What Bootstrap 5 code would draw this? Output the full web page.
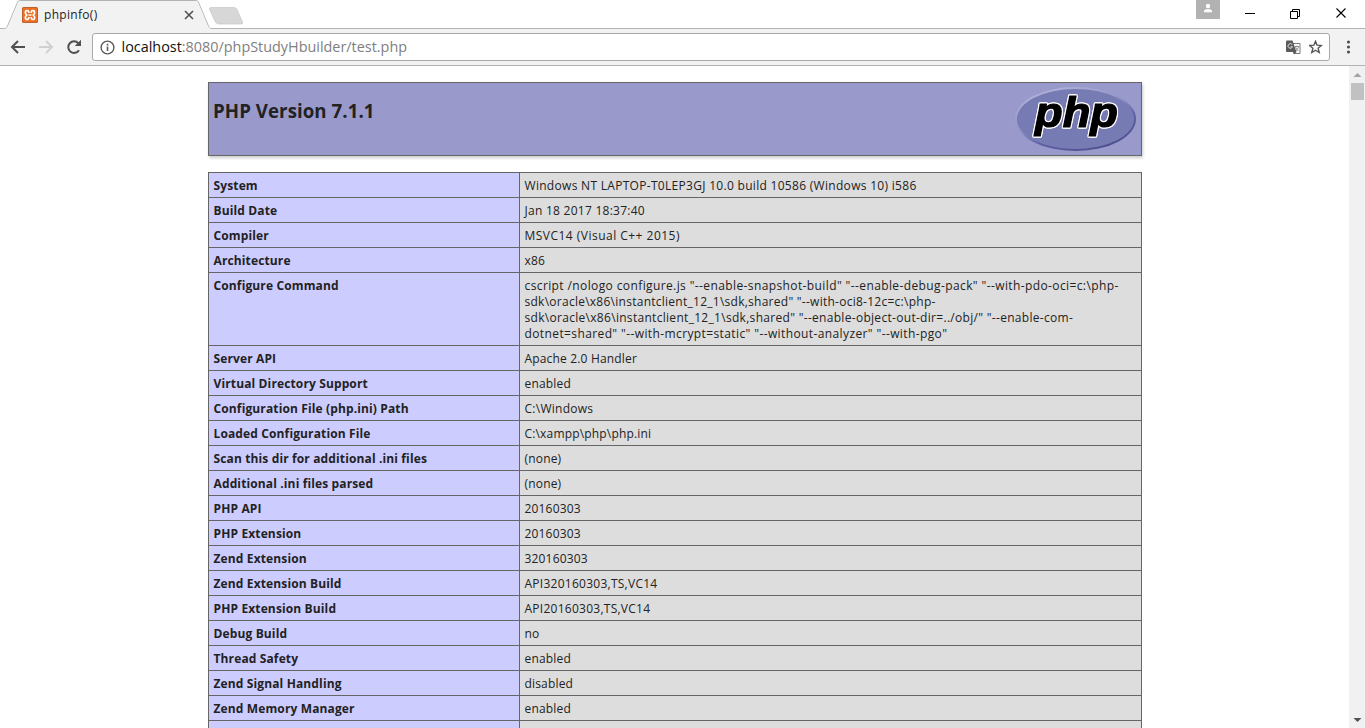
<!DOCTYPE html>
<html lang="en">
<head>
<meta charset="utf-8">
<title>phpinfo()</title>
<meta name="viewport" content="width=device-width, initial-scale=1">
<link href="https://cdn.jsdelivr.net/npm/bootstrap@5.3.0/dist/css/bootstrap.min.css" rel="stylesheet">
<style>
  body{font-family:"Open Sans","Noto Sans",sans-serif;font-size:12px;line-height:16px;color:#222;height:728px;overflow:hidden;background:#fff}
  svg{display:block;flex:none}
  .titlebar{height:29px;position:relative}
  .tabshape{position:absolute;left:0;top:0}
  .tab-label{position:relative;padding-left:22px;height:29px}
  .tab-title{font-size:12px;color:#222;width:138px;margin-left:6px;letter-spacing:.3px}
  .user-chip{position:absolute;left:1196px;top:0}
  .win-btns{position:absolute;left:1244px;top:6px}
  .toolbar-row{height:37px;background:#f2f2f2;border-bottom:1px solid #b3b3b3;padding-left:8px}
  .omnibox{width:1238px;height:28px;margin-left:10px;background:#fff;border:1px solid #a9a9a9;border-radius:3px;font-size:14.4px;padding:0 6px 0 7px;color:#808080}
  .omnibox b{font-weight:400;color:#111}
  .url{padding-left:2.500px}
  .viewport-row{height:662px}
  .page-area{width:1349px;padding:16px 0 0 208px;overflow:hidden}
  .scroller{width:16px;background:#f1f1f1}
  .thumb{width:13px;height:17px;background:#c1c1c1;margin:0 0 0 2px}
  .info-head{width:934px;height:74px;background:#99c;border:1px solid #666;box-shadow:1px 2px 3px #ccc;margin-bottom:16px;padding:4px 5px 0 4px}
  .info-head h1{font-size:18.7px;line-height:24px;font-weight:700;margin:12px 0 0;color:#222;letter-spacing:.05px}
  .php-logo{overflow:visible}
  .php-word{filter:drop-shadow(1px 0 0 #fff) drop-shadow(-1px 0 0 #fff) drop-shadow(0 1px 0 #fff) drop-shadow(0 -1px 0 #fff)}
  .info-table{width:934px;border-collapse:collapse;table-layout:fixed}
  .info-table td{border:1px solid #666;padding:5px 4px 3px 4.500px;height:25px;vertical-align:top;white-space:nowrap;letter-spacing:.17px}
  .info-table td:first-child{width:311px;background:#ccf;font-weight:700;letter-spacing:.13px}
  .info-table td:last-child{background:#ddd}
  .info-table .track-a{letter-spacing:.26px}
  .info-table .track-b{letter-spacing:.3px}
  .info-table .track-c{letter-spacing:.39px}
  .info-table .track-d{letter-spacing:.48px}
</style>
</head>
<body>
<header class="titlebar">
  <svg class="tabshape" width="1365" height="29">
    <path d="M0 28.5H4C7 28.5 7 27 8 25L17 3.500C18 1 18.500 .5 21 .5H195C198 .5 198 1 199 3.500L208 25C209 27.500 209 28.500 212 28.500H1365" fill="none" stroke="#b3b3b3"/>
    <path d="M5 29C7.500 28.500 8 27 8.500 25.500L17.500 4C18.500 1.500 19 1 21 1H195C197.500 1 197.700 1.500 198.600 4L207.500 25.500C208.500 28 209 28.500 211 29Z" fill="#f2f2f2"/>
    <path d="M211 7.500H234Q236 7.500 237 9.500L242.500 22Q243.300 24 241 24H219Q216.500 24 215.500 22L209.500 9.500Q209 7.500 211 7.500Z" fill="#d7d7d7" stroke="#c6c6c6" stroke-width=".7"/>
  </svg>
  <div class="tab-label d-flex align-items-center">
    <svg width="16" height="16"><rect width="16" height="16" rx="1.500" fill="#ee7024"/><rect x=".5" y=".5" width="15" height="15" rx="1.500" fill="none" stroke="#b96233"/><path d="M6.700 6V4.600Q6.400 3.400 5.200 3.500Q3.200 3.700 3.400 5.700Q3.500 7.300 4.800 8Q3.500 8.700 3.400 10.300Q3.200 12.300 5.200 12.500Q6.400 12.600 6.700 11.400V10M9.300 6V4.600Q9.600 3.400 10.800 3.500Q12.800 3.700 12.600 5.700Q12.500 7.300 11.200 8Q12.500 8.700 12.600 10.300Q12.800 12.300 10.800 12.500Q9.600 12.600 9.300 11.400V10M6.500 8H9.500" fill="none" stroke="#fff" stroke-width="1.700" stroke-linejoin="round"/></svg>
    <span class="tab-title">phpinfo()</span>
    <svg width="12" height="12"><path d="M3 2L11 10M11 2L3 10" stroke="#4d4d4d" stroke-width="1.500"/></svg>
  </div>
  <svg class="user-chip" width="24" height="19"><rect width="24" height="19" fill="#b2b2b2"/><circle cx="12" cy="6" r="2.200" fill="#fff"/><path d="M8 12.200V11Q8.500 9 12 9T16 11V12.200Z" fill="#fff"/></svg>
  <svg class="win-btns" width="110" height="16" fill="none" stroke="#000"><path d="M1 7.500H11M46.500 5.500H53.500V12.500H46.500ZM48.500 5V3.500H55.500V10.500H54"/><path d="M92.500 2.500L101.500 11.500M101.500 2.500L92.500 11.500" stroke-width="1.100"/></svg>
</header>
<nav class="toolbar-row d-flex align-items-center">
  <svg width="74" height="20" fill="none" stroke-width="2"><path d="M17 10H4M10 4L4 10L10 16" stroke="#505050"/><path d="M31 10H44M38 4L44 10L38 16" stroke="#d0d0d0"/><path d="M71 13.200A5.800 5.800 0 1 1 70.400 6.300" stroke="#505050"/><path d="M73 2.800V9H66.800Z" fill="#505050"/></svg>
  <div class="omnibox d-flex align-items-center">
    <svg width="15" height="15" fill="none" stroke="#5a5a5a"><circle cx="7.500" cy="7.500" r="6.400" stroke-width="1.400"/><path d="M7.500 6.500V11M7.500 3.800V5.400" stroke-width="1.600"/></svg>
    <span class="url ms-1 flex-grow-1"><b>localhost</b>:8080/phpStudyHbuilder/test.php</span>
    <svg width="15" height="15"><path d="M6.500 3.500H14V13.500H8Z" fill="#fff" stroke="#777"/><path d="M1 .5H6.500L10.500 12H1Q0 12 0 11V1.500Q0 .5 1 .5Z" fill="#5a5a5a"/><path d="M6.300 4.700A2.300 2.300 0 1 0 6.500 6.800H4.500" fill="none" stroke="#ddd"/><path d="M9 6.500H13M11 5.500V6.500M9.500 7Q10.500 10 12.500 10.800M12.500 7Q11.500 10 9.800 11" fill="none" stroke="#777" stroke-width=".8"/><path d="M7 12L10.500 12L8 14.500Z" fill="#5a5a5a"/></svg>
    <svg class="ms-2" width="14" height="14"><path d="M6.500 1.300L8.100 5.200L12.400 5.500L9.100 8.200L10.200 12.500L6.500 10.200L2.800 12.500L3.900 8.200L.6 5.500L4.900 5.200Z" fill="none" stroke="#555" stroke-width="1.400"/></svg>
  </div>
  <svg class="ms-3" width="6" height="14" fill="#505050"><circle cx="2.500" cy="2" r="1.600"/><circle cx="2.500" cy="7" r="1.600"/><circle cx="2.500" cy="12" r="1.600"/></svg>
</nav>
<div class="viewport-row d-flex">
  <main class="page-area">
    <div class="info-head d-flex justify-content-between align-items-start">
      <h1>PHP Version 7.1.1</h1>
      <svg class="php-logo" width="121" height="64" viewBox="0 0 121 64">
        <defs><linearGradient id="rim" x1=".2" y1="0" x2=".8" y2="1"><stop offset="0" stop-color="#b5b7dc"/><stop offset=".45" stop-color="#8e91c5"/><stop offset=".65" stop-color="#5f62a5"/><stop offset="1" stop-color="#484b8a"/></linearGradient></defs>
        <ellipse cx="60.500" cy="32" rx="60.500" ry="32" fill="url(#rim)"/>
        <ellipse cx="60.500" cy="32" rx="58.600" ry="30" fill="#777bb3"/>
        <text class="php-word" x="20" y="40" textLength="83" lengthAdjust="spacingAndGlyphs" font-family="Liberation Sans" font-size="42" font-weight="700" font-style="italic" fill="#000" stroke="#000" stroke-width="1.200">php</text>
      </svg>
    </div>
    <table class="info-table">
      <tr><td>System</td><td class="track-b">Windows NT LAPTOP-T0LEP3GJ 10.0 build 10586 (Windows 10) i586</td></tr>
      <tr><td>Build Date</td><td class="track-a">Jan 18 2017 18:37:40</td></tr>
      <tr><td>Compiler</td><td class="track-d">MSVC14 (Visual C++ 2015)</td></tr>
      <tr><td>Architecture</td><td>x86</td></tr>
      <tr><td>Configure Command</td><td><span class="track-c">cscript /nologo configure.js "--enable-snapshot-build" "--enable-debug-pack" "--with-pdo-oci=c:\php-</span><br><span class="track-a">sdk\oracle\x86\instantclient_12_1\sdk,shared" "--with-oci8-12c=c:\php-</span><br><span class="track-b">sdk\oracle\x86\instantclient_12_1\sdk,shared" "--enable-object-out-dir=../obj/" "--enable-com-</span><br><span class="track-c">dotnet=shared" "--with-mcrypt=static" "--without-analyzer" "--with-pgo"</span></td></tr>
      <tr><td>Server API</td><td>Apache 2.0 Handler</td></tr>
      <tr><td>Virtual Directory Support</td><td>enabled</td></tr>
      <tr><td>Configuration File (php.ini) Path</td><td class="track-a">C:\Windows</td></tr>
      <tr><td>Loaded Configuration File</td><td>C:\xampp\php\php.ini</td></tr>
      <tr><td>Scan this dir for additional .ini files</td><td>(none)</td></tr>
      <tr><td>Additional .ini files parsed</td><td>(none)</td></tr>
      <tr><td>PHP API</td><td>20160303</td></tr>
      <tr><td>PHP Extension</td><td>20160303</td></tr>
      <tr><td>Zend Extension</td><td>320160303</td></tr>
      <tr><td>Zend Extension Build</td><td class="track-a">API320160303,TS,VC14</td></tr>
      <tr><td>PHP Extension Build</td><td class="track-a">API20160303,TS,VC14</td></tr>
      <tr><td>Debug Build</td><td>no</td></tr>
      <tr><td>Thread Safety</td><td>enabled</td></tr>
      <tr><td>Zend Signal Handling</td><td>disabled</td></tr>
      <tr><td>Zend Memory Manager</td><td>enabled</td></tr>
      <tr><td>&nbsp;</td><td></td></tr>
    </table>
  </main>
  <aside class="scroller d-flex flex-column">
    <svg width="16" height="17"><path d="M4.500 11L8.500 7L12.500 11Z" fill="#a3a3a3"/></svg>
    <div class="thumb"></div>
    <svg class="mt-auto" width="16" height="16"><path d="M4.500 6L8.500 10L12.500 6Z" fill="#505050"/></svg>
  </aside>
</div>
<script src="https://cdn.jsdelivr.net/npm/bootstrap@5.3.0/dist/js/bootstrap.bundle.min.js"></script>
</body>
</html>
